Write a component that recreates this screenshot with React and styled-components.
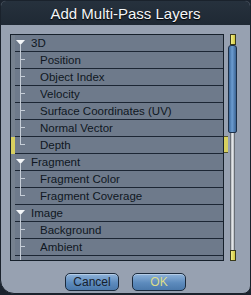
import React from "react";
import styled, { createGlobalStyle } from "styled-components";

const GlobalStyle = createGlobalStyle`
  html, body {
    margin: 0;
    padding: 0;
    background: #1b232e;
  }
  body {
    font-family: "Liberation Sans", Arial, sans-serif;
  }
`;

const groups = [
  {
    name: "3D",
    items: [
      "Position",
      "Object Index",
      "Velocity",
      "Surface Coordinates (UV)",
      "Normal Vector",
      "Depth",
    ],
  },
  { name: "Fragment", items: ["Fragment Color", "Fragment Coverage"] },
  { name: "Image", items: ["Background", "Ambient", "Diffuse"], open: true },
];

const Window = styled.div`
  width: 251px;
  height: 294px;
  box-sizing: border-box;
  background: #97a1b1;
  border: 1px solid #1a222c;
  border-radius: 6px 6px 8px 14px;
  display: flex;
  flex-direction: column;
  overflow: hidden;
`;

const TitleBar = styled.div`
  height: 24px;
  background: linear-gradient(#26313d, #1f2934);
  color: #f4f6f8;
  font-size: 15px;
  display: flex;
  align-items: center;
  justify-content: center;
  text-shadow: 0 1px 1px #000;
  flex-shrink: 0;
`;

const Body = styled.div`
  display: flex;
  flex-direction: column;
  padding: 9px 13px 0 9px;
`;

const ListArea = styled.div`
  display: flex;
  align-items: stretch;
`;

const ListBox = styled.div`
  width: 214px;
  height: 225px;
  border: 1px solid #16202b;
  background: #6e7a8b;
  overflow: hidden;
  display: flex;
  flex-direction: column;
`;

const Row = styled.div`
  display: flex;
  height: 17px;
  flex-shrink: 0;
`;

const Gutter = styled.div`
  width: 4px;
  flex-shrink: 0;
  background: ${(p) => (p.$marked ? "#d8d060" : "#76818f")};
`;

const Tree = styled.svg`
  display: block;
  flex-shrink: 0;
`;

const Label = styled.div`
  flex: 1;
  height: 16px;
  border-bottom: 1px solid #1c2634;
  color: #0f1722;
  font-size: 11.5px;
  line-height: 16px;
  white-space: nowrap;
  overflow: hidden;
`;

const SideMarks = styled.div`
  width: 4px;
  display: flex;
  flex-direction: column;
`;

const SideMark = styled.div`
  height: 15px;
  margin-top: 102px;
  background: #d8d060;
  border-top: 1px solid #59582a;
  border-bottom: 1px solid #59582a;
`;

const ScrollBar = styled.div`
  width: 9px;
  height: 227px;
  display: flex;
  flex-direction: column;
  align-items: center;
`;

const EndMark = styled.div`
  width: 4px;
  height: 9px;
  background: linear-gradient(90deg, #f2ee88, #d2c840);
  border: 1px solid #3a3a1a;
  flex-shrink: 0;
`;

const Thumb = styled.div`
  width: 7px;
  height: 86px;
  background: linear-gradient(90deg, #3d6a9c, #6c9cd0 45%, #3b6494);
  border: 1px solid #1d3048;
  border-radius: 3px 3px 2px 2px;
  flex-shrink: 0;
`;

const Track = styled.div`
  flex: 1;
  width: 5px;
  background: linear-gradient(90deg, #3b424c, #f2f4f6 40%, #c4c8cc 70%, #3b424c);
`;

const Buttons = styled.div`
  display: flex;
  justify-content: center;
  gap: 13px;
  margin-top: 12px;
  padding-left: 4px;
`;

const Button = styled.button`
  width: 54px;
  height: 18px;
  padding: 0;
  border: 1px solid #1b2a3c;
  border-radius: 5px;
  background: linear-gradient(#8fb3da, #5d8bbd 55%, #4b79ab);
  color: ${(p) => (p.$primary ? "#dcdc8a" : "#16202c")};
  font-family: "Liberation Sans", Arial, sans-serif;
  font-size: 12px;
  line-height: 16px;
  box-shadow: inset 0 1px 0 rgba(255, 255, 255, 0.35);
`;

const LINE = "#c6ced8";
const SEP = "#1c2634";

const TreeCell = ({ kind, width }) => (
  <Tree width={width} height="17">
    <line x1="0" y1="16.5" x2={width} y2="16.5" stroke={SEP} />
    {kind === "group" && (
      <>
        <polygon points="1,5 10,5 5.5,10" fill="#f4f6f8" />
        <line x1="5.5" y1="10" x2="5.5" y2="17" stroke={LINE} />
      </>
    )}
    {kind === "child" && (
      <>
        <line x1="5.5" y1="0" x2="5.5" y2="17" stroke={LINE} />
        <line x1="5" y1="7.5" x2="10" y2="7.5" stroke={LINE} />
      </>
    )}
    {kind === "last" && (
      <>
        <line x1="5.5" y1="0" x2="5.5" y2="8" stroke={LINE} />
        <line x1="5" y1="7.5" x2="10" y2="7.5" stroke={LINE} />
      </>
    )}
  </Tree>
);

export default function App() {
  const rows = [];
  groups.forEach((g) => {
    rows.push({ label: g.name, kind: "group" });
    g.items.forEach((it, i) => {
      const last = i === g.items.length - 1 && !g.open;
      rows.push({ label: it, kind: last ? "last" : "child", marked: it === "Depth" });
    });
  });

  return (
    <>
      <GlobalStyle />
      <Window>
        <TitleBar>Add Multi-Pass Layers</TitleBar>
        <Body>
          <ListArea>
            <ListBox>
              {rows.map((r) => (
                <Row key={r.label}>
                  <Gutter $marked={r.marked} />
                  <TreeCell kind={r.kind} width={r.kind === "group" ? 16 : 25} />
                  <Label>{r.label}</Label>
                </Row>
              ))}
            </ListBox>
            <SideMarks>
              <SideMark />
            </SideMarks>
            <ScrollBar>
              <EndMark />
              <Thumb />
              <Track />
              <EndMark />
            </ScrollBar>
          </ListArea>
          <Buttons>
            <Button>Cancel</Button>
            <Button $primary>OK</Button>
          </Buttons>
        </Body>
      </Window>
    </>
  );
}
